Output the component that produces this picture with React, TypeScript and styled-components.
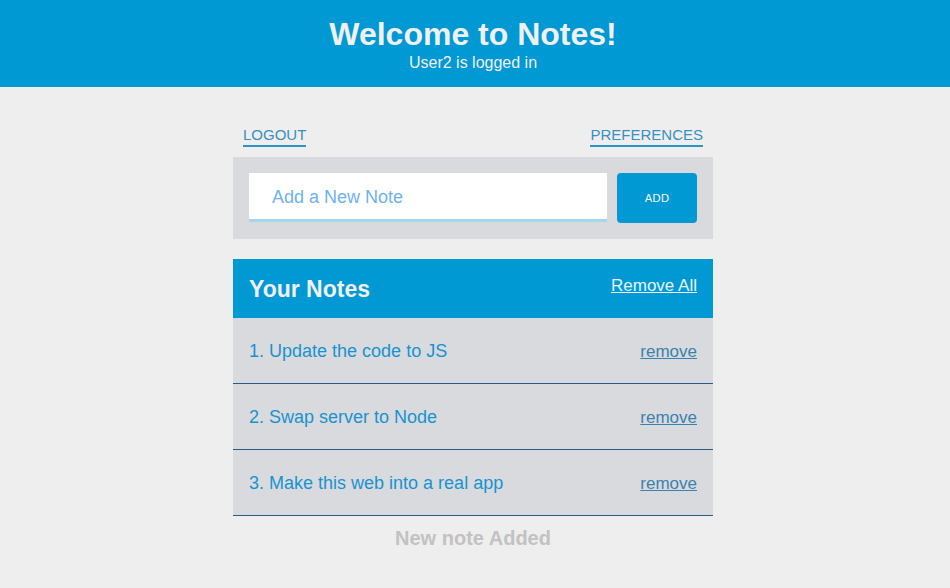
import React from "react";
import styled, { createGlobalStyle } from "styled-components";

const Global = createGlobalStyle`
  html, body { margin: 0; padding: 0; background: #eeeeee; }
  body { font-family: "Liberation Sans", Arial, sans-serif; }
  * { box-sizing: border-box; }
`;

const Header = styled.header`
  background: #0099d3;
  height: 87px;
  display: flex;
  flex-direction: column;
  align-items: center;
  padding: 16px 4px 0 0;
  color: #f0f0f0;
`;

const Title = styled.h1`
  margin: 0;
  font-size: 32px;
  font-weight: bold;
  line-height: 37px;
`;

const Subtitle = styled.div`
  font-size: 16px;
  line-height: 20px;
`;

const Main = styled.main`
  width: 480px;
  margin: 0 0 0 calc(50% - 242px);
  padding-top: 38px;
  display: flex;
  flex-direction: column;
`;

const NavRow = styled.nav`
  display: flex;
  justify-content: space-between;
  padding: 0 10px;
  height: 32px;
`;

const NavLink = styled.a`
  font-size: 15px;
  color: #3a8fc0;
  text-decoration: none;
  border-bottom: 2px solid #2a95c0;
  height: 22px;
  line-height: 20px;
`;

const AddPanel = styled.form`
  background: #d9dadd;
  padding: 16px;
  display: flex;
  gap: 10px;
  height: 82px;
`;

const Input = styled.input`
  flex: 1;
  height: 49px;
  border: none;
  border-bottom: 3px solid #a3d9ef;
  background: #fff;
  padding: 3px 0 0 23px;
  font-family: "Liberation Sans", Arial, sans-serif;
  font-size: 18px;
  outline: none;
  &::placeholder { color: #6fb2f2; }
`;

const AddButton = styled.button`
  width: 80px;
  height: 50px;
  border: none;
  border-radius: 4px;
  background: #0099d3;
  color: #f4f4f4;
  font-family: "DejaVu Sans", Tahoma, sans-serif;
  font-size: 11px;
  padding-top: 2px;
`;

const NotesHeader = styled.div`
  margin-top: 20px;
  background: #0099d3;
  height: 59px;
  display: flex;
  align-items: center;
  justify-content: space-between;
  padding: 2px 16px 0;
  color: #f0f0f0;
`;

const NotesTitle = styled.h2`
  margin: 0;
  font-size: 23px;
  font-weight: bold;
`;

const RemoveAll = styled.a`
  font-size: 17px;
  color: #e8f4fa;
  text-decoration: underline;
  margin-top: -8px;
`;

const NoteList = styled.ul`
  list-style: none;
  margin: 0;
  padding: 0;
`;

const NoteRow = styled.li`
  height: 66px;
  background: #d9dadd;
  border-bottom: 1px solid #2c5a86;
  display: flex;
  align-items: center;
  justify-content: space-between;
  padding: 2px 16px 0;
`;

const NoteText = styled.span`
  font-size: 18px;
  color: #1893d0;
`;

const RemoveLink = styled.a`
  font-size: 17px;
  color: #3a82ad;
  text-decoration: underline;
`;

const Status = styled.div`
  text-align: center;
  font-size: 20px;
  font-weight: bold;
  color: #c2c2c2;
  margin-top: 11px;
`;

const notes = [
  "Update the code to JS",
  "Swap server to Node",
  "Make this web into a real app",
];

export default function App() {
  return (
    <>
      <Global />
      <Header>
        <Title>Welcome to Notes!</Title>
        <Subtitle>User2 is logged in</Subtitle>
      </Header>
      <Main>
        <NavRow>
          <NavLink>LOGOUT</NavLink>
          <NavLink>PREFERENCES</NavLink>
        </NavRow>
        <AddPanel onSubmit={(e) => e.preventDefault()}>
          <Input placeholder="Add a New Note" />
          <AddButton type="submit">ADD</AddButton>
        </AddPanel>
        <NotesHeader>
          <NotesTitle>Your Notes</NotesTitle>
          <RemoveAll>Remove All</RemoveAll>
        </NotesHeader>
        <NoteList>
          {notes.map((n, i) => (
            <NoteRow key={n}>
              <NoteText>
                {i + 1}. {n}
              </NoteText>
              <RemoveLink>remove</RemoveLink>
            </NoteRow>
          ))}
        </NoteList>
        <Status>New note Added</Status>
      </Main>
    </>
  );
}
